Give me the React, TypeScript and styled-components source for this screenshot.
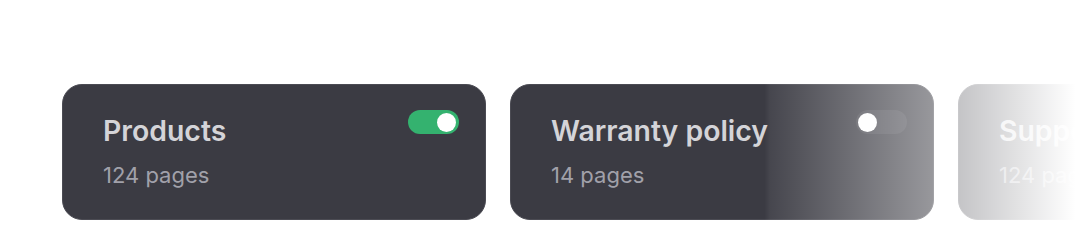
import React from "react";
import styled, { createGlobalStyle } from "styled-components";

const GlobalStyle = createGlobalStyle`
  * { box-sizing: border-box; }
  html, body { margin: 0; padding: 0; background: #ffffff; }
  body { font-family: Inter, "Noto Sans", "Liberation Sans", sans-serif; overflow: hidden; }
`;

const Stage = styled.div`
  position: relative;
  width: 1086px;
  height: 244px;
  overflow: hidden;
  background: #ffffff;
`;

const Row = styled.div`
  display: flex;
  gap: 24px;
  padding: 84px 0 0 62px;
  width: max-content;
`;

const Card = styled.div`
  flex: 0 0 auto;
  width: 424px;
  height: 136px;
  display: flex;
  align-items: flex-start;
  padding: 24px 26px 0 40px;
  background: #3b3b43;
  border: 1px solid #4b4b53;
  border-radius: 20px;
`;

const Info = styled.div`
  flex: 1;
  display: flex;
  flex-direction: column;
  padding-top: 5px;
  min-width: 0;
`;

const Title = styled.div`
  font-size: 28.4px;
  line-height: 34px;
  font-weight: 600;
  color: #d4d4d8;
  white-space: nowrap;
`;

const Meta = styled.div`
  margin-top: 13px;
  font-size: 22px;
  line-height: 28px;
  font-weight: 400;
  color: #a1a1aa;
  white-space: nowrap;
`;

const Track = styled.div<{ $on: boolean }>`
  position: relative;
  flex: 0 0 auto;
  margin-top: 1px;
  width: 51px;
  height: 24px;
  border-radius: 12px;
  background: ${(p) => (p.$on ? "#34b26f" : "rgba(255,255,255,0.07)")};
`;

const Knob = styled.div<{ $on: boolean }>`
  position: absolute;
  top: 2.5px;
  ${(p) => (p.$on ? "right: 3px;" : "left: 2px;")}
  width: 19px;
  height: 19px;
  border-radius: 50%;
  background: #ffffff;
`;

const Fade = styled.div`
  position: absolute;
  inset: 0;
  pointer-events: none;
  background: linear-gradient(
    to right,
    rgba(255, 255, 255, 0) 0%,
    rgba(255, 255, 255, 0) 70.4%,
    rgba(255, 255, 255, 0.06) 70.9%,
    rgba(255, 255, 255, 0.47) 85.8%,
    rgba(255, 255, 255, 0.7) 88.3%,
    rgba(255, 255, 255, 1) 99%
  );
`;

type Source = { title: string; pages: number; on: boolean };

const sources: Source[] = [
  { title: "Products", pages: 124, on: true },
  { title: "Warranty policy", pages: 14, on: false },
  { title: "Support", pages: 124, on: false },
];

export default function App() {
  return (
    <>
      <GlobalStyle />
      <Stage>
        <Row>
          {sources.map((s) => (
            <Card key={s.title}>
              <Info>
                <Title>{s.title}</Title>
                <Meta>{s.pages} pages</Meta>
              </Info>
              <Track $on={s.on}>
                <Knob $on={s.on} />
              </Track>
            </Card>
          ))}
        </Row>
        <Fade />
      </Stage>
    </>
  );
}
